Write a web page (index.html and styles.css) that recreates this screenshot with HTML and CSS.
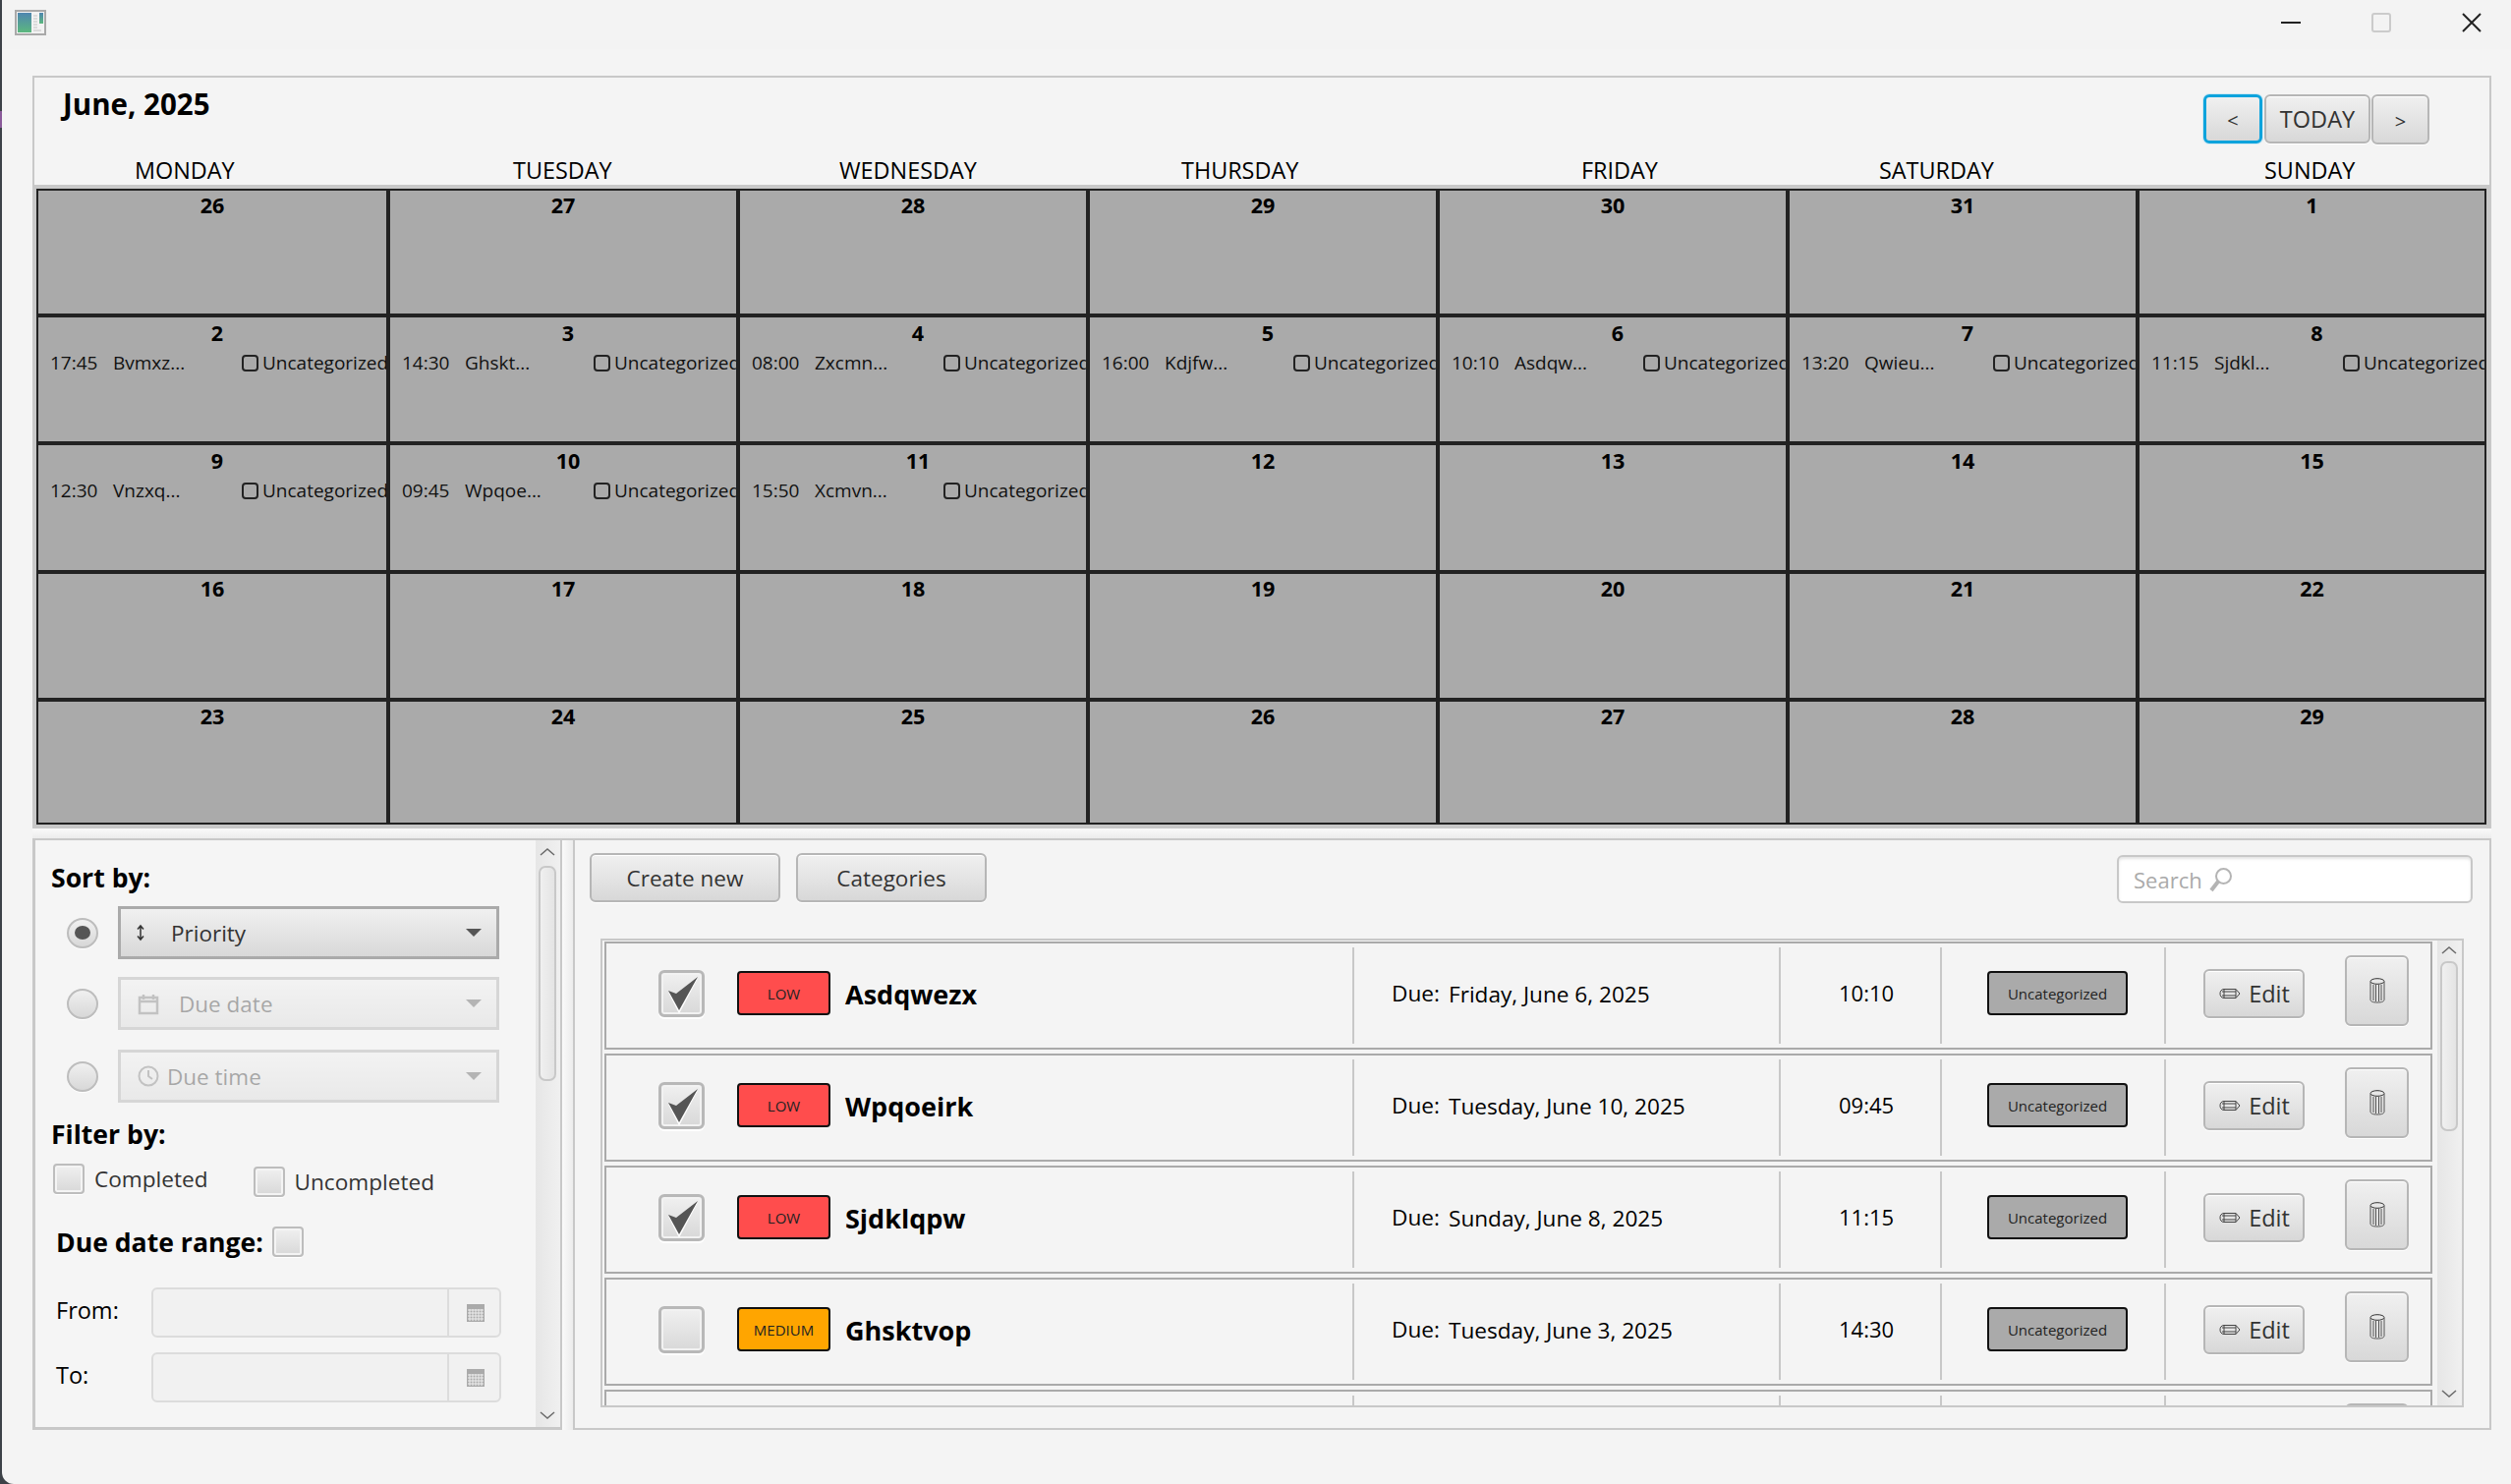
FILE: index.html
```html
<!DOCTYPE html>
<html lang="en">
<head>
    <meta charset="UTF-8">
    <title>Calendar</title>
    <link rel="stylesheet" href="styles.css">
</head>
<body>
    <svg class="sprite" width="0" height="0">
        <symbol id="i-up" viewBox="0 0 16 8"><path d="M1 7 8 1l7 6" fill="none" stroke="#6a6a6a" stroke-width="1.5"/></symbol>
        <symbol id="i-down" viewBox="0 0 16 8"><path d="M1 1l7 6 7-6" fill="none" stroke="#6a6a6a" stroke-width="1.5"/></symbol>
        <symbol id="i-check" viewBox="0 0 41 42">
            <path d="M7 18 18 40 37 4 15 23 Z" fill="#fff" transform="translate(0 1.500)"/>
            <path d="M7 18 15 21 37 4 18 38 Z" fill="#555"/>
        </symbol>
        <symbol id="i-pencil" viewBox="0 0 22 12">
            <path d="M5 1.5h12l4 4.5-4 4.5H5C2 10.5 1 8 1 6s1-4.500 4-4.500ZM3 4h14M3 8h14M5 1.500v9M17 1.500v9" fill="none" stroke="#444" stroke-width="1"/>
        </symbol>
        <symbol id="i-trash" viewBox="0 0 16 26">
            <ellipse cx="8" cy="3.500" rx="7" ry="2.800" fill="none" stroke="#333" stroke-width="1"/>
            <path d="M1 4v18c0 2 2 3 7 3s7-1 7-3V4M4 7v16M6.500 7v17M9.500 7v17M12 7v16" fill="none" stroke="#555" stroke-width="1"/>
        </symbol>
        <symbol id="i-grid" viewBox="0 0 18 18">
            <rect width="18" height="18" fill="#aaa"/>
            <path d="M1 6h16M1 9h16M1 12h16M1 15h16M3 5v12M6 5v12M9 5v12M12 5v12M15 5v12" stroke="#eee" stroke-width="1"/>
        </symbol>
    </svg>

    <div class="window">
        <div class="titlebar">
            <svg class="app-icon" width="32" height="26" viewBox="0 0 32 26">
                <defs>
                    <linearGradient id="appfill" x1="0" y1="0" x2="0" y2="1">
                        <stop offset="0" stop-color="#4f86b0"/>
                        <stop offset="1" stop-color="#5cb87e"/>
                    </linearGradient>
                </defs>
                <rect x="1" y="1" width="30" height="24" fill="#f2f2f2" stroke="#a9a9a9" stroke-width="2"/>
                <rect x="3" y="3" width="14" height="20" fill="url(#appfill)"/>
                <rect x="25" y="3" width="4" height="11" fill="url(#appfill)"/>
                <path d="M19 6h4M19 9h4M19 12h4M19 15h4M19 18h4M19 21h8" stroke="#c4c4c4" stroke-width="1"/>
            </svg>
            <div class="win-controls">
                <span class="win-min"></span>
                <span class="win-max"></span>
                <svg width="20" height="20" viewBox="0 0 20 20"><path d="M1 1l18 18M19 1 1 19" stroke="#222" stroke-width="2"/></svg>
            </div>
        </div>

        <div class="main">
            <div class="calendar-panel">
                <div class="cal-top">
                    <div class="month">June, 2025</div>
                    <div class="nav">
                        <button class="btn nav-prev">&lt;</button>
                        <button class="btn nav-today">TODAY</button>
                        <button class="btn nav-next">&gt;</button>
                    </div>
                </div>
                <div class="days">
                    <span>MONDAY</span>
                    <span>TUESDAY</span>
                    <span>WEDNESDAY</span>
                    <span>THURSDAY</span>
                    <span>FRIDAY</span>
                    <span>SATURDAY</span>
                    <span>SUNDAY</span>
                </div>
                <div class="grid-wrap">
                    <div class="cal-grid">
                        <div class="cell"><div class="num">26</div></div>
                        <div class="cell"><div class="num">27</div></div>
                        <div class="cell"><div class="num">28</div></div>
                        <div class="cell"><div class="num">29</div></div>
                        <div class="cell"><div class="num">30</div></div>
                        <div class="cell"><div class="num">31</div></div>
                        <div class="cell"><div class="num">1</div></div>

                        <div class="cell has-event"><div class="num">2</div><div class="event"><span class="ev-time">17:45</span><span class="ev-name">Bvmxz...</span><i class="ev-box"></i><span class="ev-cat">Uncategorized</span></div></div>
                        <div class="cell has-event"><div class="num">3</div><div class="event"><span class="ev-time">14:30</span><span class="ev-name">Ghskt...</span><i class="ev-box"></i><span class="ev-cat">Uncategorized</span></div></div>
                        <div class="cell has-event"><div class="num">4</div><div class="event"><span class="ev-time">08:00</span><span class="ev-name">Zxcmn...</span><i class="ev-box"></i><span class="ev-cat">Uncategorized</span></div></div>
                        <div class="cell has-event"><div class="num">5</div><div class="event"><span class="ev-time">16:00</span><span class="ev-name">Kdjfw...</span><i class="ev-box"></i><span class="ev-cat">Uncategorized</span></div></div>
                        <div class="cell has-event"><div class="num">6</div><div class="event"><span class="ev-time">10:10</span><span class="ev-name">Asdqw...</span><i class="ev-box"></i><span class="ev-cat">Uncategorized</span></div></div>
                        <div class="cell has-event"><div class="num">7</div><div class="event"><span class="ev-time">13:20</span><span class="ev-name">Qwieu...</span><i class="ev-box"></i><span class="ev-cat">Uncategorized</span></div></div>
                        <div class="cell has-event"><div class="num">8</div><div class="event"><span class="ev-time">11:15</span><span class="ev-name">Sjdkl...</span><i class="ev-box"></i><span class="ev-cat">Uncategorized</span></div></div>

                        <div class="cell has-event"><div class="num">9</div><div class="event"><span class="ev-time">12:30</span><span class="ev-name">Vnzxq...</span><i class="ev-box"></i><span class="ev-cat">Uncategorized</span></div></div>
                        <div class="cell has-event"><div class="num">10</div><div class="event"><span class="ev-time">09:45</span><span class="ev-name">Wpqoe...</span><i class="ev-box"></i><span class="ev-cat">Uncategorized</span></div></div>
                        <div class="cell has-event"><div class="num">11</div><div class="event"><span class="ev-time">15:50</span><span class="ev-name">Xcmvn...</span><i class="ev-box"></i><span class="ev-cat">Uncategorized</span></div></div>
                        <div class="cell third-row"><div class="num">12</div></div>
                        <div class="cell third-row"><div class="num">13</div></div>
                        <div class="cell third-row"><div class="num">14</div></div>
                        <div class="cell third-row"><div class="num">15</div></div>

                        <div class="cell"><div class="num">16</div></div>
                        <div class="cell"><div class="num">17</div></div>
                        <div class="cell"><div class="num">18</div></div>
                        <div class="cell"><div class="num">19</div></div>
                        <div class="cell"><div class="num">20</div></div>
                        <div class="cell"><div class="num">21</div></div>
                        <div class="cell"><div class="num">22</div></div>

                        <div class="cell"><div class="num">23</div></div>
                        <div class="cell"><div class="num">24</div></div>
                        <div class="cell"><div class="num">25</div></div>
                        <div class="cell"><div class="num">26</div></div>
                        <div class="cell"><div class="num">27</div></div>
                        <div class="cell"><div class="num">28</div></div>
                        <div class="cell"><div class="num">29</div></div>
                    </div>
                </div>
            </div>

            <div class="h-splitter"></div>

            <div class="bottom">
                <div class="side-pane">
                    <div class="side-content">
                        <div class="heading sort-heading">Sort by:</div>

                        <div class="sort-row">
                            <span class="radio selected"></span>
                            <div class="combo active">
                                <svg class="combo-icon" width="12" height="18" viewBox="0 0 12 18"><path d="M6 2v14M3 5.500 6 2l3 3.500M3 12.500 6 16l3-3.500" fill="none" stroke="#333" stroke-width="1.500"/></svg>
                                <span class="combo-text text-priority">Priority</span>
                                <span class="combo-arrow"></span>
                            </div>
                        </div>
                        <div class="sort-row row-date">
                            <span class="radio"></span>
                            <div class="combo off">
                                <svg class="combo-icon" width="22" height="23" viewBox="0 0 22 23"><path d="M2 5h18v16H2ZM2 9h18M6 2v5M16 2v5" fill="none" stroke="#777" stroke-width="2.500"/></svg>
                                <span class="combo-text text-date">Due date</span>
                                <span class="combo-arrow"></span>
                            </div>
                        </div>
                        <div class="sort-row row-time">
                            <span class="radio"></span>
                            <div class="combo off">
                                <svg class="combo-icon" width="22" height="22" viewBox="0 0 22 22"><circle cx="11" cy="11" r="9.500" fill="none" stroke="#777" stroke-width="2"/><path d="M11 5v6l4 3" fill="none" stroke="#777" stroke-width="2"/></svg>
                                <span class="combo-text text-time">Due time</span>
                                <span class="combo-arrow"></span>
                            </div>
                        </div>

                        <div class="heading filter-heading">Filter by:</div>
                        <div class="filter-row">
                            <label class="chk-label"><span class="chk"></span>Completed</label>
                            <label class="chk-label second"><span class="chk"></span>Uncompleted</label>
                        </div>

                        <div class="range-row">
                            <span class="heading">Due date range:</span>
                            <span class="chk"></span>
                        </div>

                        <div class="date-row from-row">
                            <span class="date-label">From:</span>
                            <div class="date-field">
                                <span class="date-input"></span>
                                <span class="date-btn"><svg width="18" height="18"><use href="#i-grid"/></svg></span>
                            </div>
                        </div>
                        <div class="date-row to-row">
                            <span class="date-label">To:</span>
                            <div class="date-field">
                                <span class="date-input"></span>
                                <span class="date-btn"><svg width="18" height="18"><use href="#i-grid"/></svg></span>
                            </div>
                        </div>
                    </div>
                    <div class="vscroll">
                        <svg class="sb-arrow" width="16" height="8"><use href="#i-up"/></svg>
                        <div class="sb-thumb side-thumb"></div>
                        <svg class="sb-arrow end" width="16" height="8"><use href="#i-down"/></svg>
                    </div>
                </div>

                <div class="v-splitter"></div>

                <div class="task-pane">
                    <div class="toolbar">
                        <button class="btn tool-btn">Create new</button>
                        <button class="btn tool-btn">Categories</button>
                        <div class="search">
                            <span>Search</span>
                            <svg width="24" height="26" viewBox="0 0 24 26"><circle cx="14.500" cy="9.500" r="7.500" fill="none" stroke="#b4b4b4" stroke-width="2"/><path d="M9 15 2 24" stroke="#b4b4b4" stroke-width="4"/></svg>
                        </div>
                    </div>

                    <div class="task-list">
                        <div class="rows">
                            <div class="task">
                                <div class="seg seg-title">
                                    <span class="big-check"><svg width="41" height="42"><use href="#i-check"/></svg></span>
                                    <span class="tag low">LOW</span>
                                    <span class="task-name">Asdqwezx</span>
                                </div>
                                <div class="seg seg-due"><span class="due-label">Due:</span><span class="due-date">Friday, June 6, 2025</span></div>
                                <div class="seg seg-time">10:10</div>
                                <div class="seg seg-cat"><span class="tag cat">Uncategorized</span></div>
                                <div class="seg seg-actions">
                                    <button class="btn edit-btn"><svg width="22" height="12"><use href="#i-pencil"/></svg>Edit</button>
                                    <button class="btn trash-btn"><svg width="16" height="26"><use href="#i-trash"/></svg></button>
                                </div>
                            </div>
                            <div class="task">
                                <div class="seg seg-title">
                                    <span class="big-check"><svg width="41" height="42"><use href="#i-check"/></svg></span>
                                    <span class="tag low">LOW</span>
                                    <span class="task-name">Wpqoeirk</span>
                                </div>
                                <div class="seg seg-due"><span class="due-label">Due:</span><span class="due-date">Tuesday, June 10, 2025</span></div>
                                <div class="seg seg-time">09:45</div>
                                <div class="seg seg-cat"><span class="tag cat">Uncategorized</span></div>
                                <div class="seg seg-actions">
                                    <button class="btn edit-btn"><svg width="22" height="12"><use href="#i-pencil"/></svg>Edit</button>
                                    <button class="btn trash-btn"><svg width="16" height="26"><use href="#i-trash"/></svg></button>
                                </div>
                            </div>
                            <div class="task">
                                <div class="seg seg-title">
                                    <span class="big-check"><svg width="41" height="42"><use href="#i-check"/></svg></span>
                                    <span class="tag low">LOW</span>
                                    <span class="task-name">Sjdklqpw</span>
                                </div>
                                <div class="seg seg-due"><span class="due-label">Due:</span><span class="due-date">Sunday, June 8, 2025</span></div>
                                <div class="seg seg-time">11:15</div>
                                <div class="seg seg-cat"><span class="tag cat">Uncategorized</span></div>
                                <div class="seg seg-actions">
                                    <button class="btn edit-btn"><svg width="22" height="12"><use href="#i-pencil"/></svg>Edit</button>
                                    <button class="btn trash-btn"><svg width="16" height="26"><use href="#i-trash"/></svg></button>
                                </div>
                            </div>
                            <div class="task">
                                <div class="seg seg-title">
                                    <span class="big-check"></span>
                                    <span class="tag medium">MEDIUM</span>
                                    <span class="task-name">Ghsktvop</span>
                                </div>
                                <div class="seg seg-due"><span class="due-label">Due:</span><span class="due-date">Tuesday, June 3, 2025</span></div>
                                <div class="seg seg-time">14:30</div>
                                <div class="seg seg-cat"><span class="tag cat">Uncategorized</span></div>
                                <div class="seg seg-actions">
                                    <button class="btn edit-btn"><svg width="22" height="12"><use href="#i-pencil"/></svg>Edit</button>
                                    <button class="btn trash-btn"><svg width="16" height="26"><use href="#i-trash"/></svg></button>
                                </div>
                            </div>
                            <div class="task">
                                <div class="seg seg-title"></div>
                                <div class="seg seg-due"></div>
                                <div class="seg seg-time"></div>
                                <div class="seg seg-cat"></div>
                                <div class="seg seg-actions">
                                    <span class="spacer"></span>
                                    <button class="btn trash-btn"></button>
                                </div>
                            </div>
                        </div>
                        <div class="vscroll list-scroll">
                            <svg class="sb-arrow" width="16" height="8"><use href="#i-up"/></svg>
                            <div class="sb-thumb list-thumb"></div>
                            <svg class="sb-arrow end" width="16" height="8"><use href="#i-down"/></svg>
                        </div>
                    </div>
                </div>
            </div>
        </div>
    </div>
</body>
</html>
```

FILE: styles.css
```css
* {
    box-sizing: border-box;
}
html, body {
    margin: 0;
    height: 100%;
    overflow: hidden;
}
body {
    font-family: "Open Sans", "Noto Sans", sans-serif;
    color: #000;
    background: linear-gradient(to bottom, #3d4248 0, #3d4248 113px, #8a5a9a 113px, #8a5a9a 130px, #3d4248 130px);
}
.sprite {
    position: absolute;
}
.window {
    margin-left: 2px;
    height: 1510px;
    background-color: #f4f4f4;
    border-radius: 4px 0 0 12px;
}

/* title bar */
.titlebar {
    height: 77px;
    display: flex;
    justify-content: space-between;
    align-items: flex-start;
    padding: 10px 30px 0 13px;
    background: linear-gradient(to bottom, #f3f3f3 50px, #f4f4f4 50px);
}
.win-controls {
    display: flex;
    align-items: center;
    gap: 72px;
    padding-top: 3px;
}
.win-min {
    width: 20px;
    height: 2px;
    background-color: #222;
}
.win-max {
    width: 20px;
    height: 20px;
    border: 2px solid #cbcbcb;
    border-radius: 3px;
}

/* shared button */
.btn {
    font-family: inherit;
    color: #333;
    border: 2px solid #b6b6b6;
    border-radius: 6px;
    background: linear-gradient(to bottom, #f0f0f0, #d8d8d8);
    box-shadow: inset 0 1px 0 #fff, 0 1px 0 #fff;
    padding: 0;
    display: flex;
    align-items: center;
    justify-content: center;
}

/* calendar */
.main {
    margin: 0 20px 0 31px;
}
.calendar-panel {
    border: 2px solid #c8c8c8;
    border-bottom: none;
}
.cal-top {
    height: 68px;
    display: flex;
    justify-content: space-between;
    align-items: flex-start;
    padding: 17px 61px 0 29px;
}
.month {
    font-size: 29.5px;
    font-weight: 700;
    line-height: 34px;
    margin-top: -7px;
}
.nav {
    display: flex;
    gap: 2px;
}
.nav .btn {
    font-size: 23.5px;
    height: 50px;
}
.nav-prev {
    width: 60px;
    border: 3px solid #0da3dc;
    box-shadow: 0 0 0 1px #cfe8f3;
}
.nav-today {
    width: 108px;
}
.nav .nav-prev, .nav .nav-next {
    font-size: 20px;
    padding-top: 3px;
}
.nav .nav-next {
    width: 59px;
    height: 51px;
    margin-left: -1px;
}
.days {
    height: 41px;
    padding: 11px 0 0 102px;
    display: grid;
    grid-template-columns: 385px 332px 348px 407px 303px 392px auto;
    font-size: 23.4px;
    line-height: 30px;
}
.grid-wrap {
    background-color: #c8c8c8;
    padding: 4px 3px 4px 2px;
}
.cal-grid {
    display: grid;
    grid-template-columns: 358px repeat(5, 356px) 355px;
    grid-template-rows: 129px 130px 131px 130px 127px;
}
.cell {
    background-color: #aaa;
    border: 2px solid #222;
    overflow: hidden;
    min-width: 0;
}
.num {
    font-size: 21.5px;
    font-weight: 700;
    line-height: 28px;
    text-align: center;
    margin-top: 1px;
}
.has-event .num {
    padding-left: 10px;
    margin-top: 2px;
}
.third-row .num {
    margin-top: 2px;
}
.event {
    display: flex;
    align-items: center;
    white-space: nowrap;
    font-size: 19px;
    line-height: 26px;
    color: #111;
    padding-left: 12px;
    margin-top: 3px;
}
.event > * {
    flex: none;
}
.ev-time {
    width: 64px;
}
.ev-name {
    width: 131px;
}
.ev-box {
    width: 17px;
    height: 17px;
    border: 2px solid #222;
    border-radius: 4px;
    margin-right: 4px;
}

/* splitters */
.h-splitter {
    height: 10px;
    background: linear-gradient(to bottom, #fafafa, #ececec);
}
.bottom {
    display: flex;
    height: 602px;
    background-color: #f5f5f5;
}
.v-splitter {
    width: 11px;
    background: linear-gradient(to right, #fafafa, #ececec);
    border-top: 2px solid #c8c8c8;
}

/* left pane */
.side-pane {
    width: 539px;
    display: flex;
    border: 2px solid #c8c8c8;
    border-left-width: 3px;
    border-bottom-width: 3px;
}
.side-content {
    width: 509px;
    padding: 23px 0 0 16px;
}
.heading {
    font-size: 26.6px;
    font-weight: 700;
    line-height: 30px;
}
.sort-row {
    display: flex;
    align-items: center;
    gap: 20px;
    margin: 14px 0 0 16px;
}
.row-date {
    margin-top: 18px;
}
.row-time {
    margin-top: 20px;
}
.radio {
    flex: none;
    width: 32px;
    height: 31px;
    border-radius: 50%;
    border: 2px solid #bdbdbd;
    background: linear-gradient(to bottom, #f0f0f0, #d8d8d8);
    box-shadow: 0 1px 0 #fff;
    display: flex;
    align-items: center;
    justify-content: center;
}
.radio.selected::after {
    content: "";
    width: 16px;
    height: 14px;
    border-radius: 50%;
    background-color: #555;
}
.combo {
    width: 388px;
    height: 54px;
    display: flex;
    align-items: center;
    padding: 0 15px 0 14px;
    border: 3px solid #aaa;
    background: linear-gradient(to bottom, #f0f0f0, #d8d8d8);
    font-size: 22.5px;
    color: #333;
}
.combo.off {
    opacity: 0.4;
}
.off .combo-icon {
    margin-left: 3px;
}
.combo-arrow {
    width: 0;
    height: 0;
    margin-left: auto;
    border-left: 8px solid transparent;
    border-right: 8px solid transparent;
    border-top: 8px solid #555;
}
.text-priority {
    margin-left: 25px;
}
.text-date {
    margin-left: 20px;
}
.text-time {
    margin-left: 8px;
}
.filter-heading {
    margin: 17px 0 0 0;
}
.filter-row {
    display: flex;
    align-items: flex-start;
    gap: 46px;
    margin: 15px 0 0 2px;
}
.chk-label {
    display: flex;
    align-items: center;
    gap: 10px;
    font-size: 22.6px;
    color: #333;
}
.chk-label.second {
    margin-top: 3px;
}
.chk {
    flex: none;
    display: block;
    width: 32px;
    height: 31px;
    border: 2px solid #bdbdbd;
    border-radius: 4px;
    background: linear-gradient(to bottom, #f0f0f0, #d8d8d8);
    box-shadow: inset 0 0 0 2px #f4f4f4, 0 1px 0 #fff;
}
.range-row {
    display: flex;
    align-items: center;
    gap: 9px;
    margin: 30px 0 0 5px;
}
.date-row {
    display: flex;
    align-items: center;
    margin-left: 5px;
}
.from-row {
    margin-top: 31px;
}
.to-row {
    margin-top: 15px;
}
.date-label {
    width: 97px;
    font-size: 23.5px;
    margin-top: -6px;
}
.date-field {
    width: 356px;
    height: 51px;
    display: flex;
    border: 2px solid #dcdcdc;
    border-radius: 6px;
    background-color: #f1f1f1;
}
.date-input {
    flex: 1;
    border-right: 2px solid #dcdcdc;
}
.date-btn {
    width: 51px;
    display: flex;
    align-items: center;
    justify-content: center;
    padding: 1px 0 0 2px;
}

/* scrollbars */
.vscroll {
    width: 25px;
    display: flex;
    flex-direction: column;
    align-items: flex-start;
    background: linear-gradient(to right, #e6e6e6, #f0f0f0);
}
.sb-arrow {
    flex: none;
    margin: 8px 0 0 4px;
}
.sb-arrow.end {
    margin: auto 0 8px 4px;
}
.sb-thumb {
    width: 18px;
    margin-left: 3px;
    border: 2px solid #c8c8c8;
    border-radius: 7px;
    background: linear-gradient(to right, #f0f0f0, #e4e4e4);
}
.side-thumb {
    height: 219px;
    margin-top: 10px;
}
.list-thumb {
    height: 173px;
    margin-top: 7px;
}
.list-scroll .sb-arrow:first-child {
    margin-top: 6px;
}

/* right pane */
.task-pane {
    flex: 1;
    min-width: 0;
    border: 2px solid #c8c8c8;
    padding: 13px 17px 0 15px;
    background-color: #f4f4f4;
}
.toolbar {
    display: flex;
    align-items: flex-start;
    gap: 16px;
}
.tool-btn {
    width: 194px;
    height: 50px;
    font-size: 22.5px;
}
.search {
    margin: 2px 0 0 auto;
    width: 362px;
    height: 49px;
    display: flex;
    align-items: center;
    gap: 7px;
    padding-left: 15px;
    background-color: #fff;
    border: 2px solid #c8c8c8;
    border-radius: 6px;
    box-shadow: inset 0 2px 3px #e4e4e4;
    font-size: 22px;
    color: #aaa;
}
.task-list {
    display: flex;
    margin: 36px 0 0 11px;
    width: 1896px;
    height: 477px;
    border: 2px solid #c8c8c8;
    overflow: hidden;
}
.rows {
    flex: 1;
    min-width: 0;
    display: flex;
    flex-direction: column;
    gap: 4px;
    padding: 1px 5px 0 2px;
}
.task {
    flex: none;
    height: 110px;
    display: grid;
    grid-template-columns: 759px 434px 164px 228px 1fr;
    padding: 4px 0;
    border: 2px solid #aaa;
    background-color: #f4f4f4;
}
.seg {
    display: flex;
    align-items: center;
    border-left: 2px solid #c8c8c8;
    min-width: 0;
}
.seg-title {
    border-left: none;
    padding-left: 53px;
}
.big-check {
    flex: none;
    width: 47px;
    height: 48px;
    margin-bottom: 4px;
    border: 3px solid #b8b8b8;
    border-radius: 6px;
    background: linear-gradient(to bottom, #f0f0f0, #d8d8d8);
    box-shadow: inset 0 0 0 2px #f2f2f2, 0 2px 0 #fff;
}
.big-check svg {
    display: block;
}
.tag {
    flex: none;
    height: 45px;
    margin-bottom: 5px;
    display: flex;
    align-items: center;
    justify-content: center;
    border: 2px solid #111;
    border-radius: 4px;
    font-size: 15px;
    color: #222;
}
.low {
    width: 95px;
    margin-left: 33px;
    background-color: #ff4d4d;
}
.medium {
    width: 95px;
    margin-left: 33px;
    background-color: #ffa500;
}
.cat {
    width: 143px;
    background-color: #aaa;
}
.task-name {
    margin: 0 0 4px 15px;
    font-size: 27px;
    font-weight: 700;
}
.seg-due {
    padding-left: 38px;
    font-size: 22.6px;
}
.due-label {
    width: 58px;
    margin-bottom: 6px;
}
.due-date {
    margin-bottom: 3px;
}
.seg-time {
    padding: 0 0 6px 59px;
    font-size: 22px;
}
.seg-cat {
    padding-left: 46px;
}
.seg-actions {
    padding-left: 38px;
}
.edit-btn {
    width: 103px;
    height: 50px;
    margin-bottom: 4px;
    gap: 8px;
    padding-left: 1px;
    font-size: 23.5px;
}
.trash-btn {
    width: 65px;
    height: 72px;
    margin: 0 0 10px 41px;
}
.spacer {
    width: 103px;
}
.list-scroll {
    flex: none;
}
```
